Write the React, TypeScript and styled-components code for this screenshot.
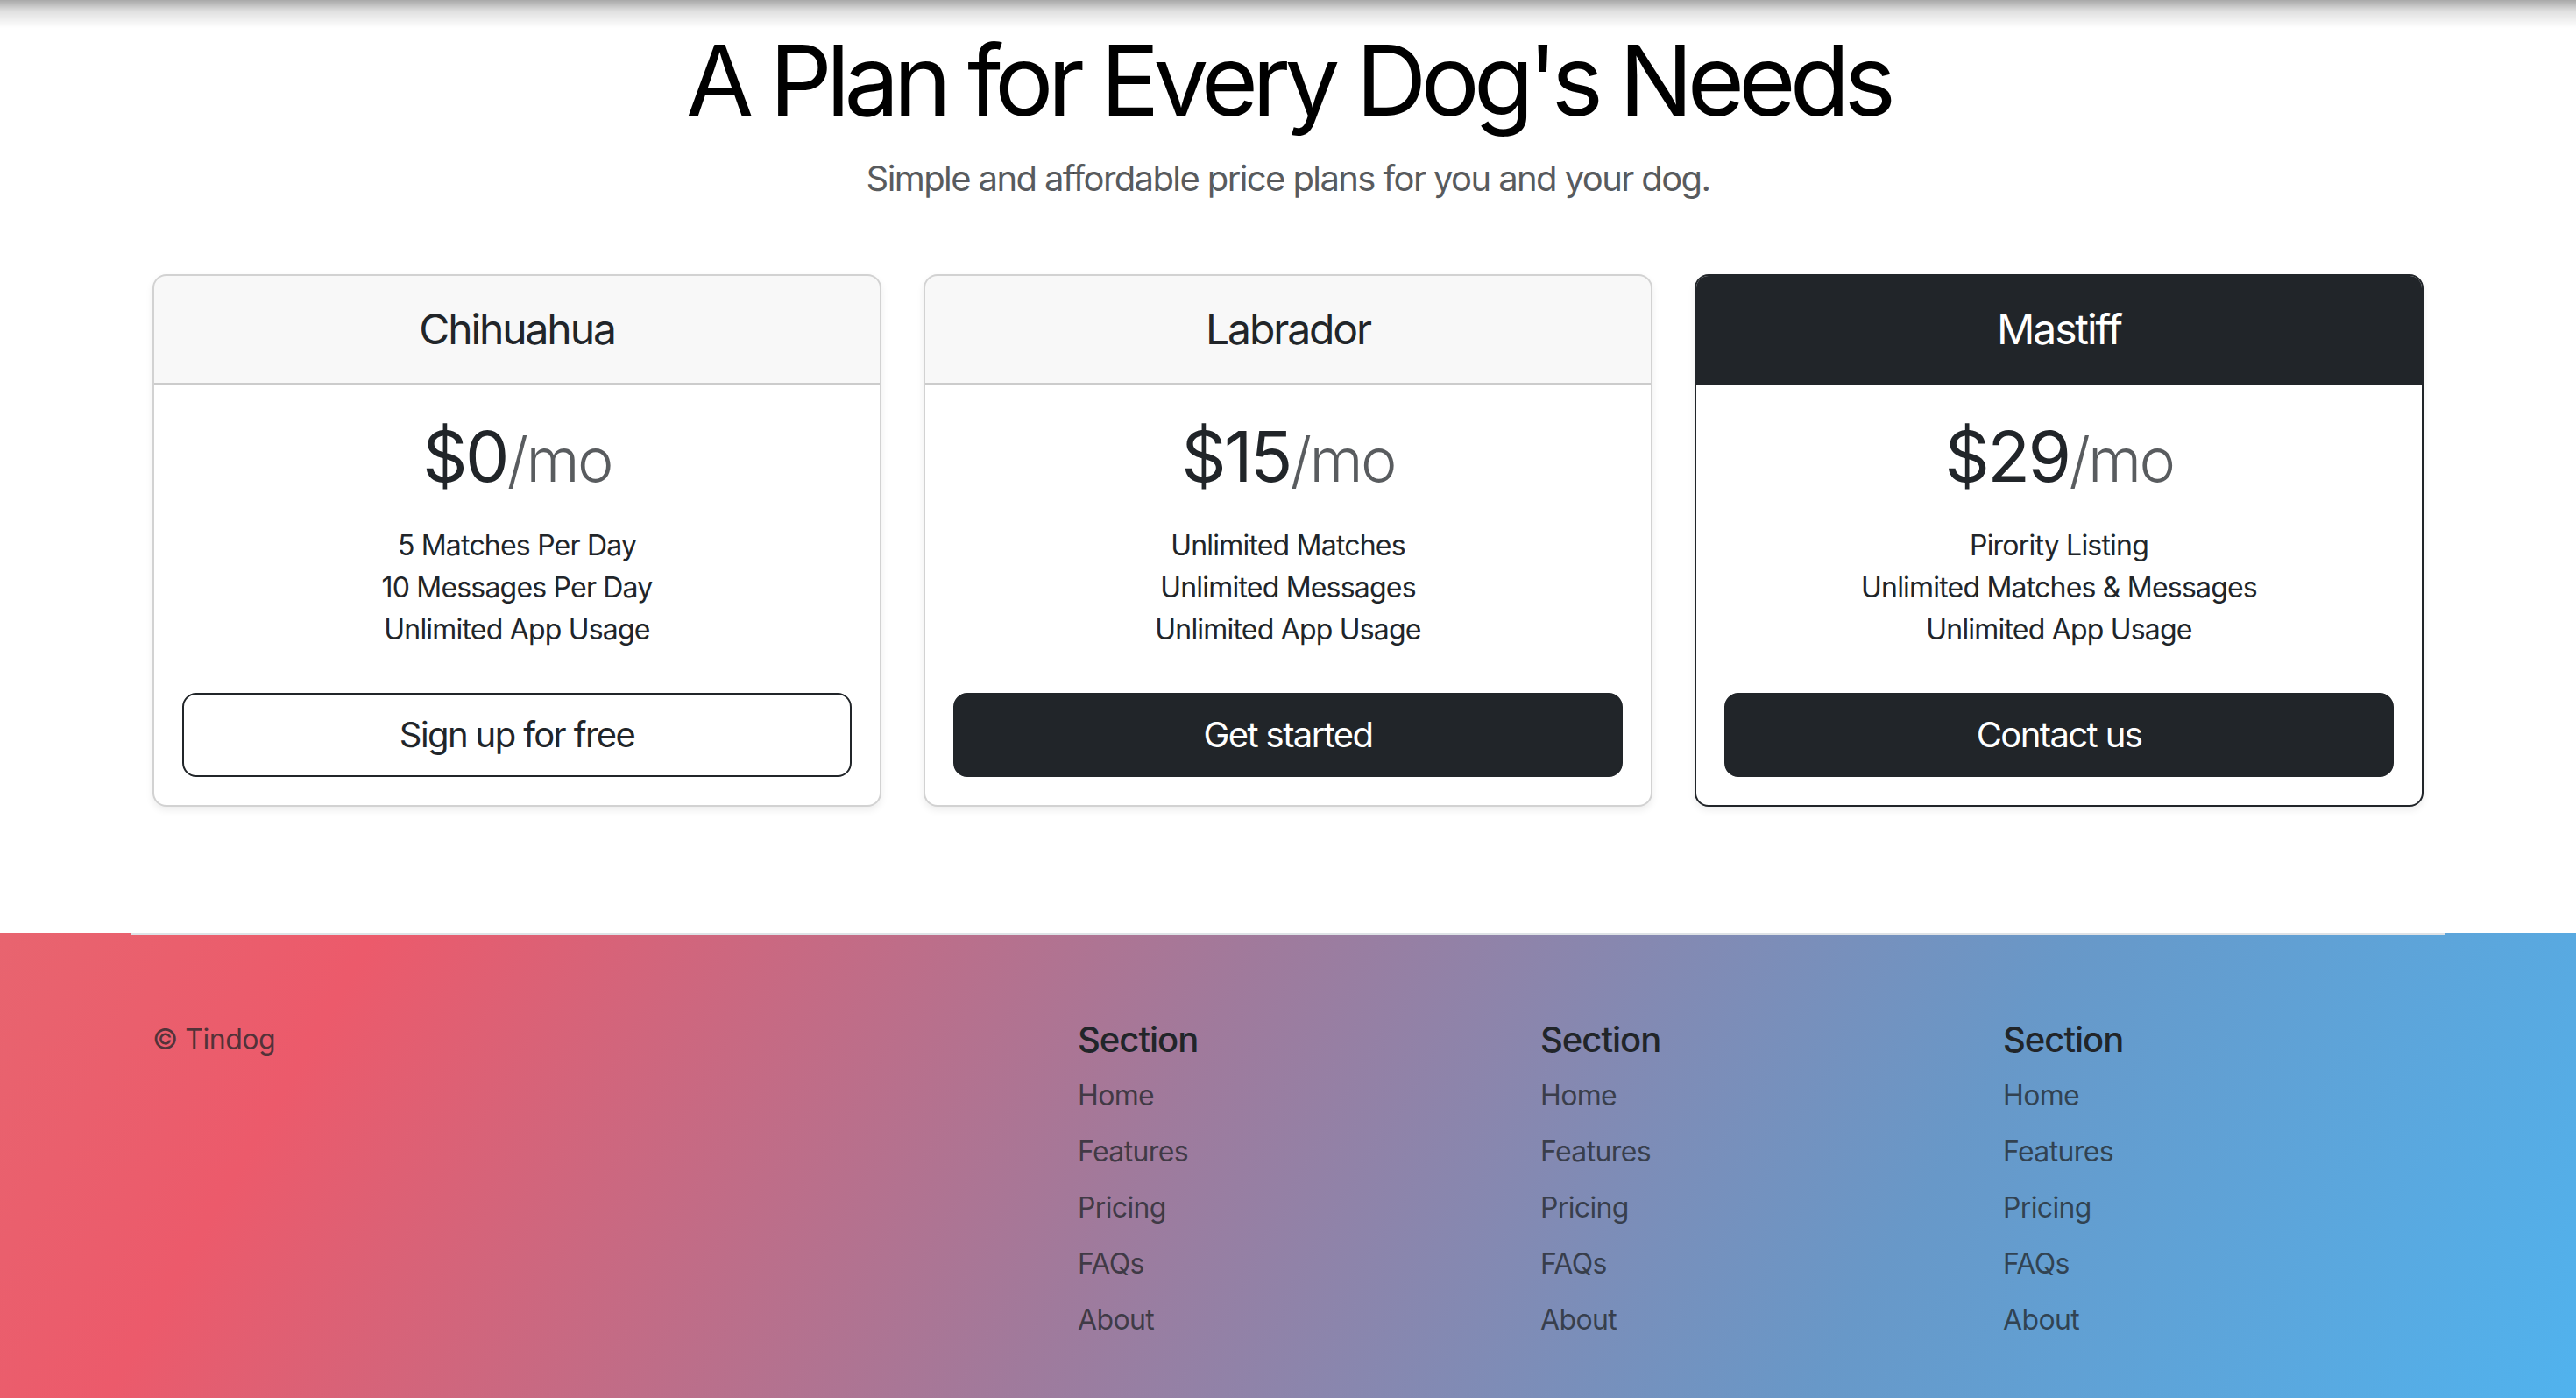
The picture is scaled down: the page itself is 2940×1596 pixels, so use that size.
import styled, { createGlobalStyle } from 'styled-components'

const GlobalStyle = createGlobalStyle`
  * {
    box-sizing: border-box;
  }

  html,
  body {
    margin: 0;
    padding: 0;
    background: #ffffff;
  }

  body {
    font-family: Inter, 'Noto Sans', 'Liberation Sans', sans-serif;
    font-size: 32px;
    line-height: 1.5;
    color: #212529;
  }
`

const TopShade = styled.div`
  position: fixed;
  top: 0;
  left: 0;
  right: 0;
  height: 32px;
  background: linear-gradient(to bottom, rgba(0, 0, 0, 0.34), rgba(0, 0, 0, 0.12) 40%, rgba(0, 0, 0, 0));
  pointer-events: none;
  z-index: 10;
`

const PricingSection = styled.section`
  padding-top: 24px;
  text-align: center;
`

const Title = styled.h2`
  margin: 0 0 16px;
  font-size: 112px;
  font-weight: 400;
  line-height: 1.2;
  letter-spacing: -0.06em;
  color: #000000;
`

const Lead = styled.p`
  margin: 0 0 79px;
  font-size: 40px;
  line-height: 1.5;
  letter-spacing: -0.04em;
  color: rgba(33, 37, 41, 0.75);
`

const CardRow = styled.div`
  width: 2640px;
  margin: 0 auto;
  padding: 0 24px;
  display: grid;
  grid-template-columns: repeat(3, 1fr);
  gap: 48px;
`

const Card = styled.div<{ $dark?: boolean }>`
  display: flex;
  flex-direction: column;
  border: 2px solid ${({ $dark }) => ($dark ? '#212529' : 'rgba(0, 0, 0, 0.175)')};
  border-radius: 16px;
  background: #ffffff;
  box-shadow: 0 4px 8px rgba(0, 0, 0, 0.075);
  overflow: hidden;
`

const CardHeader = styled.div<{ $dark?: boolean }>`
  padding: 32px;
  background: ${({ $dark }) => ($dark ? '#212529' : 'rgba(33, 37, 41, 0.03)')};
  border-bottom: 2px solid ${({ $dark }) => ($dark ? '#212529' : 'rgba(0, 0, 0, 0.175)')};
  color: ${({ $dark }) => ($dark ? '#ffffff' : '#212529')};
`

const PlanName = styled.h4`
  margin: 0;
  font-size: 48px;
  font-weight: 400;
  line-height: 1.2;
  letter-spacing: -0.044em;
`

const CardBody = styled.div`
  padding: 32px;
`

const Price = styled.h1`
  margin: 2px 0 30px;
  font-size: 80px;
  font-weight: 400;
  line-height: 1.2;
  letter-spacing: -0.033em;
  color: #212529;
`

const PerMonth = styled.small`
  font-size: 0.875em;
  font-weight: 300;
  color: rgba(33, 37, 41, 0.75);
`

const FeatureList = styled.ul`
  list-style: none;
  margin: 0 0 48px;
  padding: 0;
`

const Feature = styled.li`
  font-size: 32px;
  line-height: 48px;
  letter-spacing: -0.025em;
`

const PlanButton = styled.button<{ $outline?: boolean }>`
  display: block;
  width: 100%;
  padding: 16px 32px;
  font-family: inherit;
  font-size: 40px;
  font-weight: 400;
  line-height: 1.5;
  letter-spacing: -0.04em;
  border-radius: 16px;
  border: 2px solid #212529;
  background: ${({ $outline }) => ($outline ? 'transparent' : '#212529')};
  color: ${({ $outline }) => ($outline ? '#212529' : '#ffffff')};
  cursor: pointer;
`

const FooterBand = styled.footer`
  margin-top: 144px;
  background: linear-gradient(120deg, #e8646f 0%, #ec5a6b 13%, #a07a9c 44%, #6898c8 72%, #4fb4f0 100%);
`

const FooterInner = styled.div`
  width: 2640px;
  margin: 0 auto;
  padding: 96px 0;
  border-top: 2px solid #dee2e6;
  display: grid;
  grid-template-columns: repeat(5, 1fr);
`

const FooterCol = styled.div`
  padding: 0 24px;
  margin-bottom: 32px;
`

const Copyright = styled.p`
  margin: 0;
  font-size: 32px;
  line-height: 48px;
  letter-spacing: -0.015em;
  color: rgba(33, 37, 41, 0.75);
`

const SectionTitle = styled.h5`
  margin: 0 0 16px;
  font-size: 40px;
  font-weight: 500;
  line-height: 1.2;
  letter-spacing: -0.025em;
  color: #212529;
`

const NavList = styled.ul`
  list-style: none;
  margin: 0;
  padding: 0;
`

const NavItem = styled.li`
  margin-bottom: 16px;
`

const NavLink = styled.a`
  font-size: 32px;
  line-height: 48px;
  letter-spacing: -0.02em;
  color: rgba(33, 37, 41, 0.75);
  text-decoration: none;
`

const plans = [
  {
    name: 'Chihuahua',
    price: '$0',
    features: ['5 Matches Per Day', '10 Messages Per Day', 'Unlimited App Usage'],
    cta: 'Sign up for free',
    outline: true,
  },
  {
    name: 'Labrador',
    price: '$15',
    features: ['Unlimited Matches', 'Unlimited Messages', 'Unlimited App Usage'],
    cta: 'Get started',
  },
  {
    name: 'Mastiff',
    price: '$29',
    features: ['Pirority Listing', 'Unlimited Matches & Messages', 'Unlimited App Usage'],
    cta: 'Contact us',
    dark: true,
  },
]

const links = ['Home', 'Features', 'Pricing', 'FAQs', 'About']

export default function App() {
  return (
    <>
      <GlobalStyle />
      <TopShade />
      <PricingSection>
        <Title>A Plan for Every Dog's Needs</Title>
        <Lead>Simple and affordable price plans for you and your dog.</Lead>
        <CardRow>
          {plans.map((plan) => (
            <Card key={plan.name} $dark={plan.dark}>
              <CardHeader $dark={plan.dark}>
                <PlanName>{plan.name}</PlanName>
              </CardHeader>
              <CardBody>
                <Price>
                  {plan.price}
                  <PerMonth>/mo</PerMonth>
                </Price>
                <FeatureList>
                  {plan.features.map((f) => (
                    <Feature key={f}>{f}</Feature>
                  ))}
                </FeatureList>
                <PlanButton $outline={plan.outline}>{plan.cta}</PlanButton>
              </CardBody>
            </Card>
          ))}
        </CardRow>
      </PricingSection>
      <FooterBand>
        <FooterInner>
          <FooterCol>
            <Copyright>© Tindog</Copyright>
          </FooterCol>
          <FooterCol />
          {[0, 1, 2].map((i) => (
            <FooterCol key={i}>
              <SectionTitle>Section</SectionTitle>
              <NavList>
                {links.map((l) => (
                  <NavItem key={l}>
                    <NavLink href="#">{l}</NavLink>
                  </NavItem>
                ))}
              </NavList>
            </FooterCol>
          ))}
        </FooterInner>
      </FooterBand>
    </>
  )
}
